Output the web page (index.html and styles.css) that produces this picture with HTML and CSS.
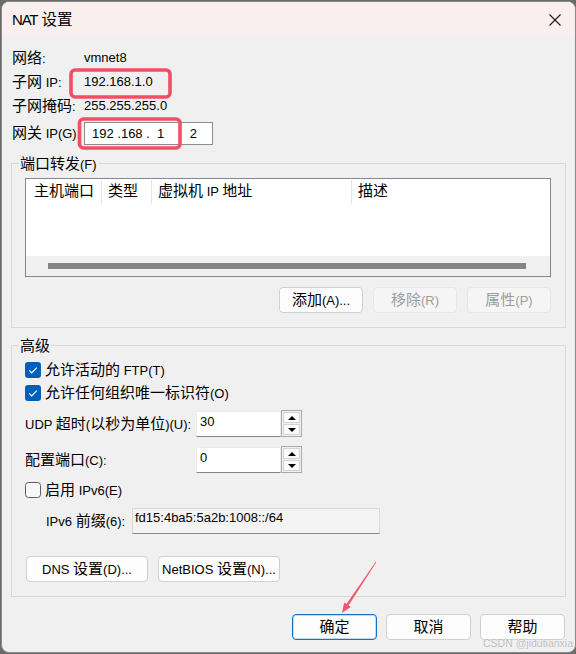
FILE: index.html
```html
<!DOCTYPE html>
<html lang="zh-CN">
<head>
<meta charset="utf-8">
<title>NAT 设置</title>
<link rel="stylesheet" href="styles.css">
</head>
<body>
<div class="dialog">
  <div class="titlebar">
    <span class="title"><span class="tl">NAT</span> <span class="c tc">设置</span></span>
    <svg class="close" width="12" height="12" viewBox="0 0 12 12"><path d="M0.5 0.5L11.5 11.5M11.5 0.5L0.5 11.5" stroke="#1a1a1a" stroke-width="1.1" fill="none"/></svg>
  </div>
  <div class="content">
    <div class="info">
      <div class="irow"><span class="lbl"><span class="c">网络</span>:</span><span>vmnet8</span></div>
      <div class="irow"><span class="lbl"><span class="c">子网</span> IP:</span><span>192.168.1.0</span></div>
      <div class="irow"><span class="lbl"><span class="c">子网掩码</span>:</span><span>255.255.255.0</span></div>
      <div class="irow gw"><span class="lbl"><span class="c">网关</span> IP(G):</span>
        <div class="ipbox"><span class="oct">192 .168 .  1</span><span class="oct4">2</span></div>
      </div>
    </div>

    <div class="group g1">
      <span class="legend"><span class="c">端口转发</span>(F)</span>
      <div class="list">
        <div class="lhead">
          <div class="col col1"><span class="c">主机端口</span></div>
          <div class="col col2"><span class="c">类型</span></div>
          <div class="col col3"><span class="c">虚拟机</span> IP <span class="c">地址</span></div>
          <div class="col col4"><span class="c">描述</span></div>
        </div>
        <div class="hscroll"><div class="thumb"></div></div>
      </div>
      <div class="btnrow">
        <button class="btn"><span class="c">添加</span>(A)...</button>
        <button class="btn disabled"><span class="c">移除</span>(R)</button>
        <button class="btn disabled"><span class="c">属性</span>(P)</button>
      </div>
    </div>

    <div class="group g2">
      <span class="legend"><span class="c">高级</span></span>
      <div class="cbrow">
        <svg class="cb" width="16" height="16" viewBox="0 0 16 16"><rect x="0" y="0" width="16" height="16" rx="3" fill="#005fb8"/><path d="M4.2 8.4L6.7 10.8L11.8 5.6" stroke="#fff" stroke-width="1.2" fill="none"/></svg>
        <span><span class="c">允许活动的</span> FTP(T)</span>
      </div>
      <div class="cbrow">
        <svg class="cb" width="16" height="16" viewBox="0 0 16 16"><rect x="0" y="0" width="16" height="16" rx="3" fill="#005fb8"/><path d="M4.2 8.4L6.7 10.8L11.8 5.6" stroke="#fff" stroke-width="1.2" fill="none"/></svg>
        <span><span class="c">允许任何组织唯一标识符</span>(O)</span>
      </div>
      <div class="spinrow">
        <span class="slbl">UDP <span class="c">超时</span>(<span class="c">以秒为单位</span>)(U):</span>
        <div class="spin">
          <div class="spinin">30</div>
          <div class="spinbtns">
            <div class="sb"><svg width="8" height="4" viewBox="0 0 8 4"><path d="M0 4L4 0L8 4Z" fill="#000"/></svg></div>
            <div class="sb"><svg width="8" height="4" viewBox="0 0 8 4"><path d="M0 0L8 0L4 4Z" fill="#000"/></svg></div>
          </div>
        </div>
      </div>
      <div class="spinrow second">
        <span class="slbl"><span class="c">配置端口</span>(C):</span>
        <div class="spin">
          <div class="spinin">0</div>
          <div class="spinbtns">
            <div class="sb"><svg width="8" height="4" viewBox="0 0 8 4"><path d="M0 4L4 0L8 4Z" fill="#000"/></svg></div>
            <div class="sb"><svg width="8" height="4" viewBox="0 0 8 4"><path d="M0 0L8 0L4 4Z" fill="#000"/></svg></div>
          </div>
        </div>
      </div>
      <div class="cbrow v6">
        <svg class="cb" width="16" height="16" viewBox="0 0 16 16"><rect x="0.5" y="0.5" width="15" height="15" rx="3" fill="#f7f7f7" stroke="#5d5d5d"/></svg>
        <span><span class="c">启用</span> IPv6(E)</span>
      </div>
      <div class="prefrow">
        <span class="plbl">IPv6 <span class="c">前缀</span>(6):</span>
        <div class="prefix">fd15:4ba5:5a2b:1008::/64</div>
      </div>
      <div class="dnsrow">
        <button class="btn wide">DNS <span class="c">设置</span>(D)...</button>
        <button class="btn wide">NetBIOS <span class="c">设置</span>(N)...</button>
      </div>
    </div>

    <div class="footer">
      <button class="btn fbtn primary"><span class="c">确定</span></button>
      <button class="btn fbtn"><span class="c">取消</span></button>
      <button class="btn fbtn"><span class="c">帮助</span></button>
    </div>
  </div>
</div>

<svg class="annot" width="576" height="654" viewBox="0 0 576 654">
  <rect x="71" y="70" width="99" height="27" rx="4" fill="none" stroke="#f24f67" stroke-width="3.6"/>
  <rect x="79.5" y="119" width="100.5" height="29" rx="4" fill="none" stroke="#f24f67" stroke-width="3.6"/>
  <polygon points="376.3,562.2 348.5,605.4 350.8,606.9 342,613 344.2,602.5 346.5,604 375.7,561.8" fill="#f2566c"/>
</svg>
<div class="watermark">CSDN @jidutianxia</div>
</body>
</html>
```
FILE: styles.css
```css
* { box-sizing: border-box; }
html, body { margin: 0; padding: 0; }
body {
  width: 576px;
  height: 654px;
  overflow: hidden;
  background: #6a6a6a;
  font-family: "Liberation Sans", Arial, sans-serif;
  font-size: 13px;
  color: #000;
}
.c {
  font-family: "Noto Sans CJK SC", "Noto Sans CJK JP", sans-serif;
  font-size: 15px;
  line-height: 1;
}
.dialog {
  position: relative;
  margin: 1px 0 0 1px;
  width: 575px;
  height: 652px;
  border: 1px solid #8a8a8a;
  border-radius: 8px;
  background: #f0f0f0;
  overflow: hidden;
}
.titlebar {
  height: 35px;
  background: #f9efee;
  display: flex;
  align-items: center;
  justify-content: space-between;
  padding: 0 14px 0 10px;
  line-height: 18px;
}
.title { font-size: 15px; }
.tl { letter-spacing: -1.2px; }
.c.tc { font-size: 15.5px; }
.close { display: block; margin-top: 1px; }
.content { padding: 0 9px; }
.info { padding: 9px 0 0 1px; }
.irow {
  height: 24px;
  display: flex;
  align-items: center;
  line-height: 18px;
}
.lbl { width: 72px; flex: none; }
.irow.gw { height: 23px; margin-top: 4px; }
.ipbox {
  width: 129px;
  height: 23px;
  background: #fff;
  border: 1px solid #8c8c8c;
  display: flex;
  align-items: center;
  padding: 0 15px 0 7px;
  white-space: pre;
  line-height: 18px;
}
.oct4 { margin-left: auto; }

.group {
  position: relative;
  border: 1px solid #d9d9d9;
}
.legend {
  position: absolute;
  top: -9px;
  left: 7px;
  padding: 0 1px;
  background: #f0f0f0;
  line-height: 18px;
}
.g1 {
  margin-top: 18px;
  padding: 14px 14px 14px 13px;
}
.list {
  height: 99px;
  border: 1px solid #828790;
  background: #fff;
  display: flex;
  flex-direction: column;
}
.lhead { display: flex; height: 26px; }
.col {
  height: 24px;
  margin-top: 1px;
  line-height: 24px;
  border-right: 1px solid #e5e5e5;
  padding-left: 6px;
  white-space: nowrap;
}
.col1 { width: 76px; padding-left: 8px; }
.col2 { width: 50px; }
.col3 { width: 200px; }
.col4 { flex: 1; border-right: none; }
.hscroll {
  margin-top: auto;
  height: 20px;
  background: #f0f0f0;
  padding: 7px 24px 7px 22px;
}
.thumb { height: 6px; background: #858585; }
.btnrow {
  margin-top: 10px;
  display: flex;
  justify-content: flex-end;
  gap: 10px;
}
.btn {
  font: inherit;
  color: #000;
  height: 26px;
  width: 84px;
  padding: 0;
  background: #fdfdfd;
  border: 1px solid #d0d0d0;
  border-radius: 4px;
  line-height: 18px;
  white-space: nowrap;
}
.btn.disabled {
  background: #f5f5f5;
  border-color: #e6e6e6;
  color: #9d9d9d;
}

.g2 {
  margin-top: 17px;
  padding: 14px 14px 14px 13px;
}
.cbrow {
  height: 20px;
  display: flex;
  align-items: center;
  gap: 4px;
  line-height: 18px;
}
.cbrow + .cbrow { margin-top: 3px; }
.cb { display: block; flex: none; }
.spinrow {
  margin-top: 8px;
  height: 26px;
  display: flex;
  align-items: center;
  line-height: 18px;
}
.spinrow.second { margin-top: 10px; }
.slbl { width: 171px; flex: none; white-space: nowrap; }
.spin { display: flex; height: 26px; }
.spinin {
  width: 85px;
  height: 26px;
  background: #fff;
  border: 1px solid #ececec;
  border-bottom-color: #868686;
  padding: 1px 0 0 3px;
  line-height: 18px;
}
.spinbtns {
  width: 21px;
  height: 27px;
  margin-top: -1px;
  border: 1px solid #a9a9a9;
  background: #f0f0f0;
  display: flex;
  flex-direction: column;
  gap: 1px;
  padding: 1px;
}
.sb {
  flex: 1;
  background: #f9f9f9;
  border: 1px solid #d4d4d4;
  display: flex;
  align-items: center;
  justify-content: center;
}
.sb svg { display: block; }
.cbrow.v6 { margin-top: 7px; }
.prefrow {
  margin-top: 8px;
  height: 26px;
  display: flex;
  align-items: center;
  padding-left: 21px;
  line-height: 18px;
}
.plbl { width: 86px; flex: none; white-space: nowrap; }
.prefix {
  width: 248px;
  height: 26px;
  background: #f3f3f3;
  border: 1px solid #dadada;
  border-bottom-color: #8a8a8a;
  padding: 0 0 0 2px;
  line-height: 18px;
}
.dnsrow {
  margin-top: 22px;
  padding-left: 1px;
  display: flex;
  gap: 10px;
}
.btn.wide { width: 122px; }

.footer {
  margin-top: 17px;
  display: flex;
  justify-content: flex-end;
  gap: 9px;
  padding-right: 1px;
}
.btn.fbtn { width: 85px; }
.btn.primary {
  border-color: #1a6fc4;
  box-shadow: inset 0 0 0 1px rgba(26, 111, 196, 0.25);
}

.annot {
  position: absolute;
  left: 0;
  top: 0;
  pointer-events: none;
}
.watermark {
  position: absolute;
  left: 483px;
  top: 637px;
  font-size: 10.5px;
  line-height: 13px;
  color: #bdbdbd;
  text-shadow: 0 0 1px #fff;
  white-space: nowrap;
}
```
